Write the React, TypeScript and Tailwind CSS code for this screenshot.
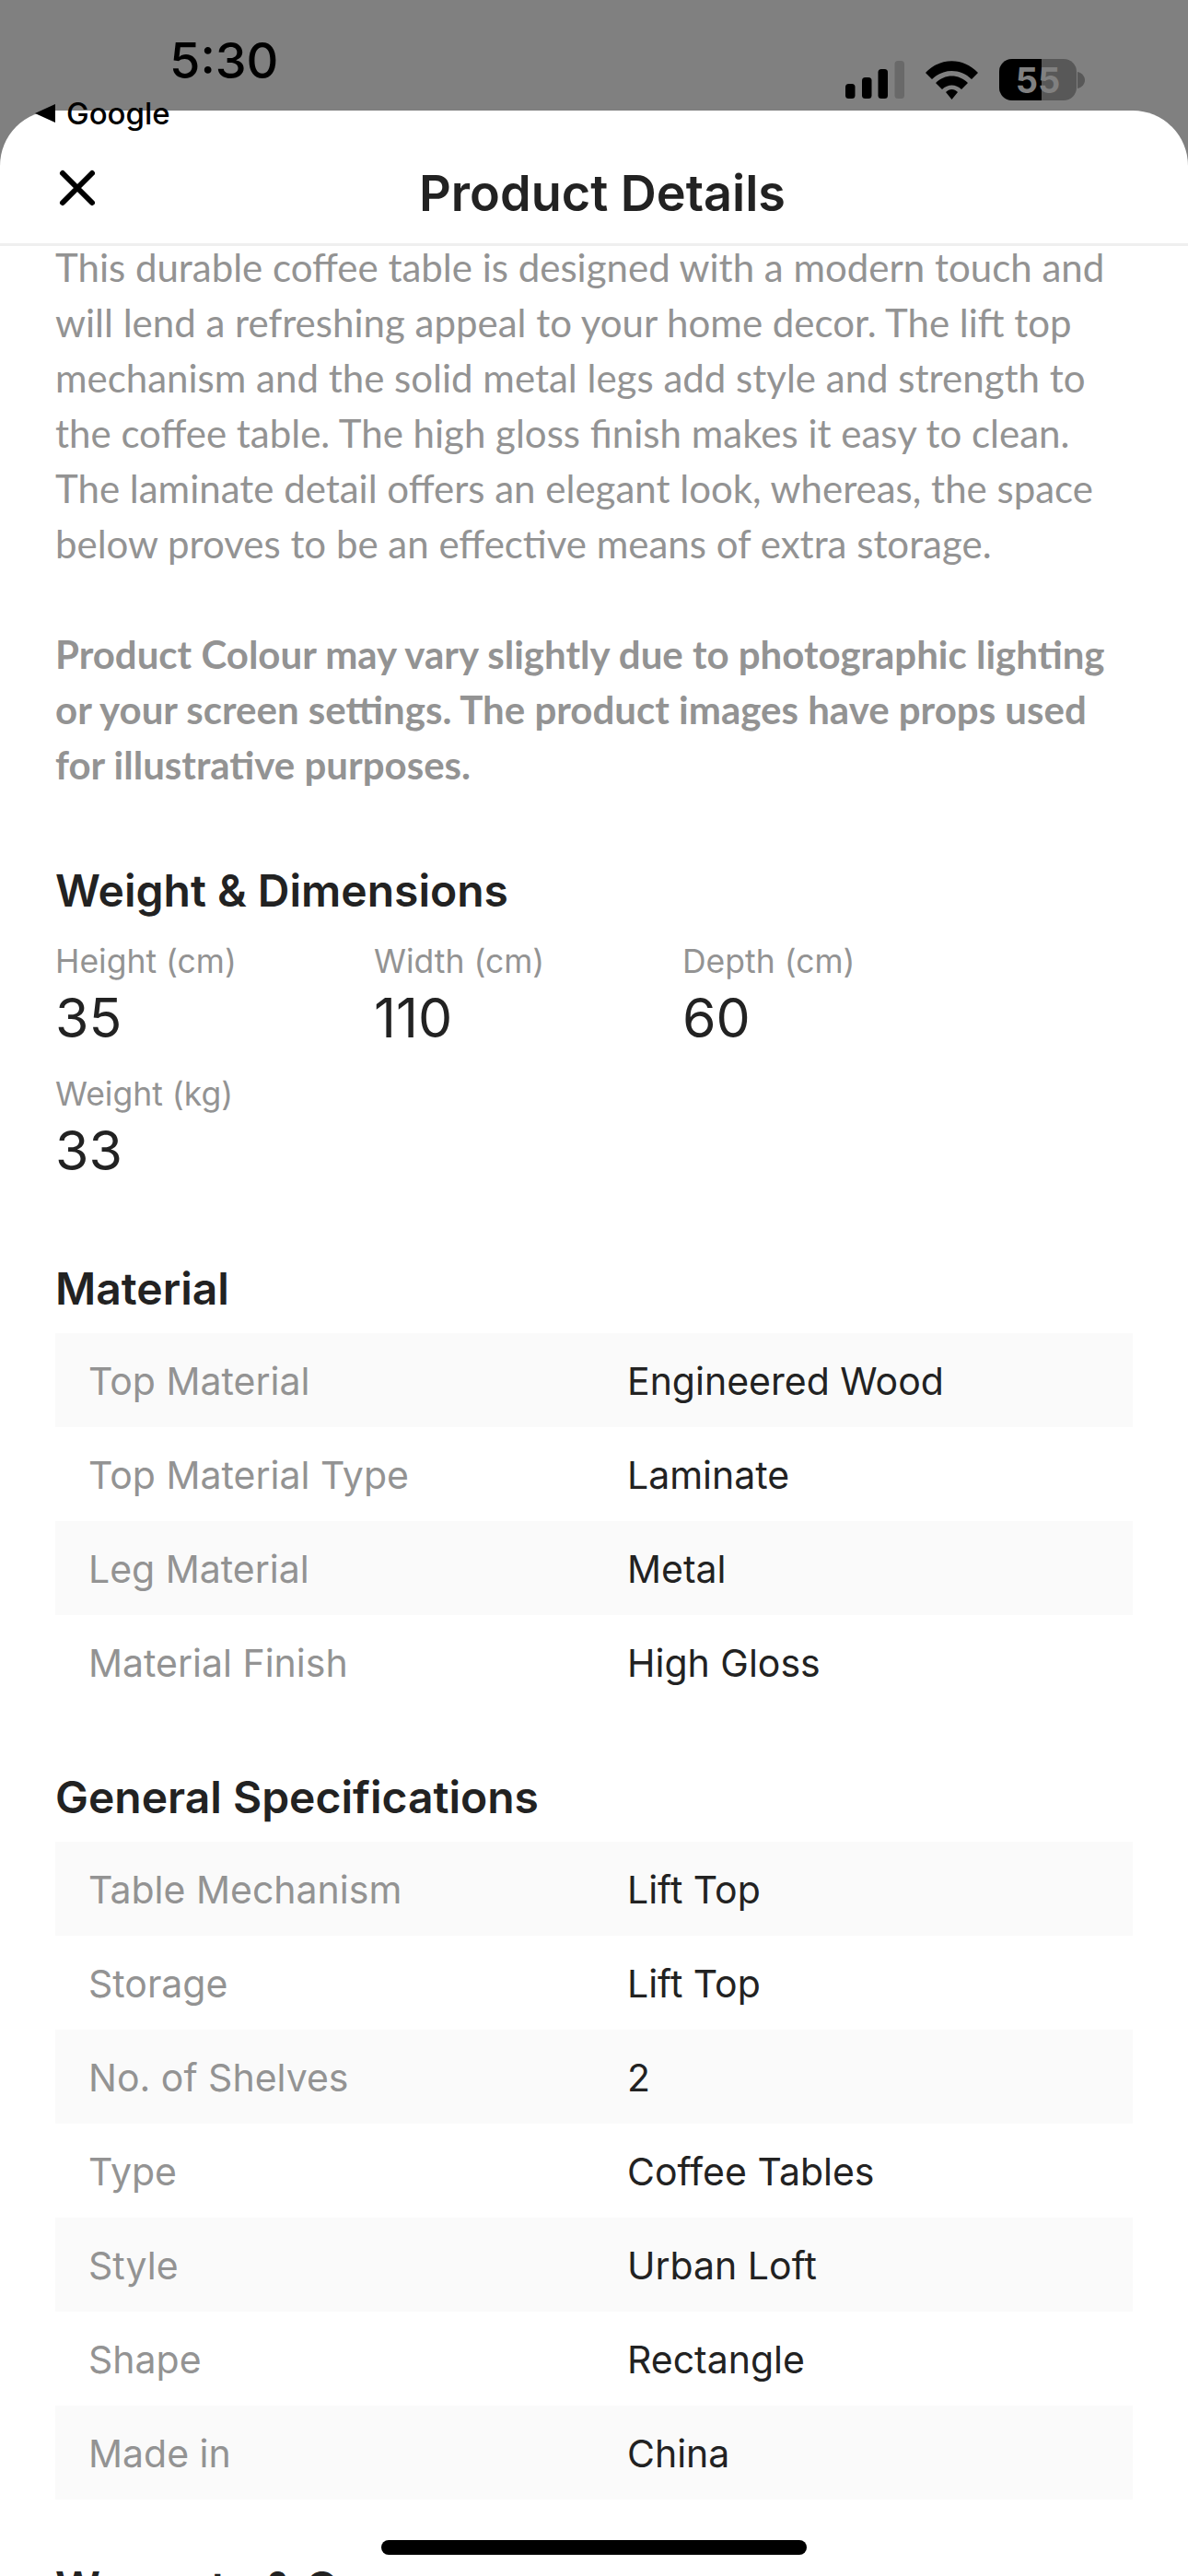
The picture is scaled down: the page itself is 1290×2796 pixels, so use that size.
const inter = "font-['Inter','Liberation_Sans',sans-serif]";

function Spec({ rows }: { rows: [string, string][] }) {
  return (
    <div className="mx-[60px] mt-[18px]">
      {rows.map(([k, v], i) => (
        <div key={k} className={`flex h-[102px] items-center pt-[3px] text-[41px] ${i % 2 === 0 ? "bg-[#fafafa]" : "bg-white"}`}>
          <div className="w-[621px] pl-[36px] text-[#939393]">{k}</div>
          <div className="text-[#222222]">{v}</div>
        </div>
      ))}
    </div>
  );
}

function Dim({ label, value, w }: { label: string; value: string; w: string }) {
  return (
    <div className={w}>
      <div className="h-[52px] pt-[1px] text-[35.5px] leading-[50px] text-[#939393]">{label}</div>
      <div className="h-[70px] text-[59px] leading-[70px] text-[#222222]">{value}</div>
    </div>
  );
}

export default function App() {
  return (
    <div className={`relative h-[2796px] w-[1290px] overflow-hidden bg-[#808080] ${inter}`}>
      <div className="flex h-[120px] items-start justify-between">
        <div className="pl-[184px] pt-[34px] text-[54px] leading-[64px] font-medium text-black">5:30</div>
        <div className="flex items-center gap-[23px] pr-[121px] pt-[64px]">
          <svg width="64" height="41" viewBox="0 0 64 41">
            <rect x="0" y="25" width="10.5" height="16" rx="3.5" fill="#000" />
            <rect x="18" y="18" width="10.5" height="23" rx="3.5" fill="#000" />
            <rect x="35.5" y="9" width="10.5" height="32" rx="3.5" fill="#000" />
            <rect x="53.5" y="0" width="10.5" height="41" rx="3.5" fill="#696969" />
          </svg>
          <svg width="57" height="42" viewBox="0 0 57 42">
            <path d="M0 13 C16 -4 41 -4 57 13 L50 20 C38 8 19 8 7 20 Z" fill="#000" />
            <path d="M11 24 C21 14 36 14 46 24 L39 31 C33 25 24 25 18 31 Z" fill="#000" />
            <path d="M22 34 C26 30 31 30 35 34 L28.5 42 Z" fill="#000" />
          </svg>
          <div className="relative flex h-[45px] w-[84px] items-center justify-center overflow-hidden rounded-[14px] bg-[#585858] text-[38px] leading-none font-bold text-[#808080]">
            <div className="absolute inset-y-0 left-0 w-[46px] bg-black" />
            <span className="relative">55</span>
          </div>
        </div>
      </div>
      <svg className="absolute left-[1170px] top-[77px]" width="8" height="20" viewBox="0 0 8 20">
        <path d="M0 1 C5 2 8 6 8 10 C8 14 5 18 0 19 Z" fill="#585858" />
      </svg>

      <div className="h-[2676px] overflow-hidden rounded-t-[60px] bg-white">
        <div className="relative flex h-[147px] items-center justify-center border-b-[3px] border-[#efefef] pl-[18px] pt-[36px]">
          <svg className="absolute left-[62px] top-[62px]" width="44" height="44" viewBox="0 0 44 44">
            <path d="M6 6 L38 38 M38 6 L6 38" stroke="#000" strokeWidth="6" strokeLinecap="round" />
          </svg>
          <h1 className="text-[54px] leading-[64px] font-semibold text-[#222222]">Product Details</h1>
        </div>

        <div className="px-[60px] font-['Lato','Liberation_Sans',sans-serif] text-[42px] leading-[60px] text-[#939393]">
          <p className="-mt-[7px] whitespace-nowrap">
            This durable coffee table is designed with a modern touch and<br />
            will lend a refreshing appeal to your home decor. The lift top<br />
            mechanism and the solid metal legs add style and strength to<br />
            the coffee table. The high gloss finish makes it easy to clean.<br />
            The laminate detail offers an elegant look, whereas, the space<br />
            below proves to be an effective means of extra storage.
          </p>
          <p className="mt-[60px] whitespace-nowrap font-bold">
            Product Colour may vary slightly due to photographic lighting<br />
            or your screen settings. The product images have props used<br />
            for illustrative purposes.
          </p>
        </div>

        <h2 className="mx-[60px] mt-[77px] text-[48px] leading-[60px] font-semibold text-[#222222]">Weight &amp; Dimensions</h2>
        <div className="mx-[60px] mt-[21px] flex">
          <Dim label="Height (cm)" value="35" w="w-[346px]" />
          <Dim label="Width (cm)" value="110" w="w-[335px]" />
          <Dim label="Depth (cm)" value="60" w="w-[300px]" />
        </div>
        <div className="mx-[60px] mt-[22px] flex">
          <Dim label="Weight (kg)" value="33" w="w-[346px]" />
        </div>

        <h2 className="mx-[60px] mt-[85px] text-[48px] leading-[60px] font-semibold text-[#222222]">Material</h2>
        <Spec rows={[["Top Material", "Engineered Wood"], ["Top Material Type", "Laminate"], ["Leg Material", "Metal"], ["Material Finish", "High Gloss"]]} />

        <h2 className="mx-[60px] mt-[66px] text-[48px] leading-[60px] font-semibold text-[#222222]">General Specifications</h2>
        <Spec rows={[["Table Mechanism", "Lift Top"], ["Storage", "Lift Top"], ["No. of Shelves", "2"], ["Type", "Coffee Tables"], ["Style", "Urban Loft"], ["Shape", "Rectangle"], ["Made in", "China"]]} />

        <h2 className="mx-[60px] mt-[66px] text-[48px] leading-[60px] font-semibold text-[#222222]">Warranty &amp; Care</h2>
      </div>

      <div className="absolute left-[37px] top-[108px] flex items-center gap-[12px] text-[33px] leading-[30px] text-black">
        <svg width="23" height="20" viewBox="0 0 23 20">
          <path d="M23 0 V20 L1 10 Z" fill="#000" />
        </svg>
        <span className="font-medium">Google</span>
      </div>

      <div className="absolute bottom-[23px] left-[414px] h-[16px] w-[462px] rounded-full bg-black" />
    </div>
  );
}
